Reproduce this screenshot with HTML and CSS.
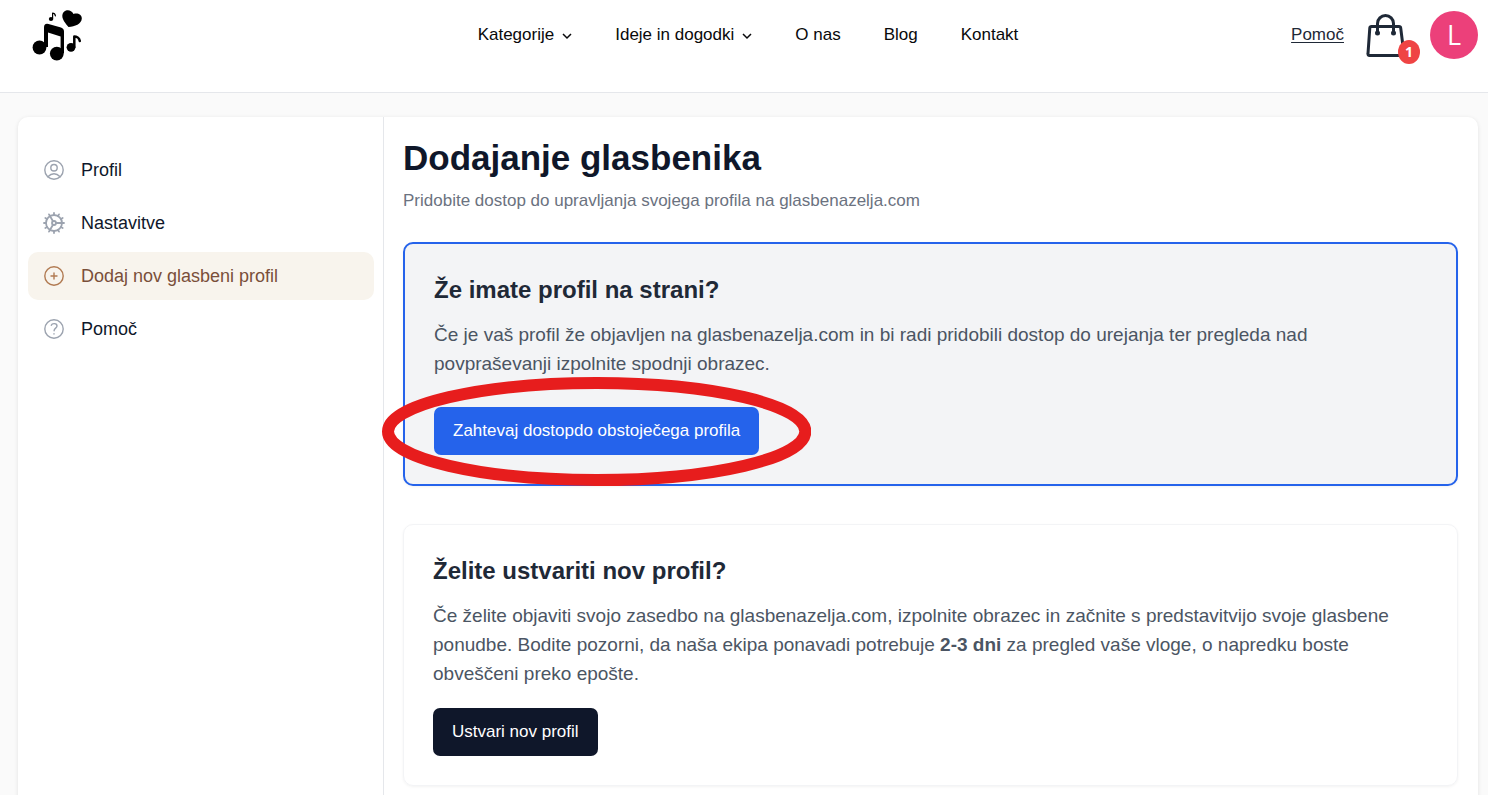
FILE: index.html
```html
<!DOCTYPE html>
<html lang="sl">
<head>
  <meta charset="UTF-8">
  <meta name="viewport" content="width=device-width, initial-scale=1.0">
  <title>Dodajanje glasbenika</title>
  <link rel="stylesheet" href="styles.css">
</head>
<body>
  <header>
    <a href="#" class="logo" aria-label="Glasbena želja">
      <svg width="52" height="52" viewBox="0 0 52 52">
        <circle cx="7.500" cy="38.500" r="6.900"/>
        <circle cx="24.800" cy="44.600" r="6.900"/>
        <path d="M12 38V18.500q0-4.500 4.500-3.500l12.500 3.500q3 1 3 4V44h-3.400V27.500l-12.600-4V38z"/>
        <circle cx="39" cy="38.300" r="4.400"/>
        <path d="M42.300 38V27.500c2 0 5 1.500 5.500 4.500" class="logo-line"/>
        <ellipse cx="19" cy="10" rx="2.200" ry="2"/>
        <path d="M20.600 10V4.200c1.200 0 2.500 1 2.800 2.600" class="logo-thin"/>
        <path d="M36.500 18c-3-3.500-6.800-8-6.100-12C31 .8 38.500-1 41.500 5c4-1.500 8.500.5 8.300 4.500C49.500 15 43 17.500 36.500 18z"/>
      </svg>
    </a>
    <nav>
      <ul>
        <li><a href="#">Kategorije <svg class="chevron" viewBox="0 0 10 10"><path d="M1 3l4 4 4-4"/></svg></a></li>
        <li><a href="#">Ideje in dogodki <svg class="chevron" viewBox="0 0 10 10"><path d="M1 3l4 4 4-4"/></svg></a></li>
        <li><a href="#">O nas</a></li>
        <li><a href="#">Blog</a></li>
        <li><a href="#">Kontakt</a></li>
      </ul>
    </nav>
    <div class="header-right">
      <a href="#" class="help-link">Pomoč</a>
      <a href="#" class="cart" aria-label="Košarica">
        <svg width="40" height="44" viewBox="0 0 40 44">
          <path d="M5.500 13.500h27.500q1.500 0 1.700 1.500l3.300 26q0 1.500-1.500 1.500h-33q-1.700 0-1.500-2L3.800 15q.2-1.500 1.700-1.500z"/>
          <path d="M11.500 20V10.500a8 8 0 0 1 16 0V20"/>
          <circle cx="11.500" cy="20" r="1"/>
          <circle cx="27.500" cy="20" r="1"/>
        </svg>
        <span class="cart-badge">1</span>
      </a>
      <button class="avatar">L</button>
    </div>
  </header>

  <main>
    <aside>
      <a href="#" class="side-link">
        <svg viewBox="0 0 24 24"><circle cx="12" cy="12" r="9.200"/><circle cx="12" cy="9.750" r="3.200"/><path d="M5.800 18.700q6.200-6 12.400 0"/></svg>
        Profil
      </a>
      <a href="#" class="side-link">
        <svg class="gear" viewBox="0 0 24 24"><circle cx="12" cy="12" r="8"/><circle cx="12" cy="12" r="2"/><path d="M14 12h8M11 10.300L7.500 4.200M11 13.700l-3.500 6.100M2 12h2M12 2v2M12 20v2M7 3.340l1 1.730M17 3.340l-1 1.730M3.340 7l1.730 1M20.660 7l-1.730 1M3.340 17l1.730-1M20.660 17l-1.730-1M7 20.660l1-1.730M17 20.660l-1-1.730"/></svg>
        Nastavitve
      </a>
      <a href="#" class="side-link active">
        <svg viewBox="0 0 24 24"><circle cx="12" cy="12" r="9.200"/><path d="M12 9v6M9 12h6"/></svg>
        Dodaj nov glasbeni profil
      </a>
      <a href="#" class="side-link">
        <svg viewBox="0 0 24 24"><circle cx="12" cy="12" r="9.200"/><path d="M9.300 8.300c.8-2.300 5.700-2.300 5.700.7 0 2.200-2.900 2-2.900 4.700M12 16.800v.3"/></svg>
        Pomoč
      </a>
    </aside>

    <section class="content">
      <h1>Dodajanje glasbenika</h1>
      <p class="subtitle">Pridobite dostop do upravljanja svojega profila na glasbenazelja.com</p>

      <div class="card card-selected">
        <h2>Že imate profil na strani?</h2>
        <p>Če je vaš profil že objavljen na glasbenazelja.com in bi radi pridobili dostop do urejanja ter pregleda nad povpraševanji izpolnite spodnji obrazec.</p>
        <div class="highlight">
          <button class="btn btn-blue">Zahtevaj dostopdo obstoječega profila</button>
          <svg class="ring" viewBox="0 0 428 109" preserveAspectRatio="none"><ellipse cx="214" cy="54.500" rx="208" ry="48.500"/></svg>
        </div>
      </div>

      <div class="card">
        <h2>Želite ustvariti nov profil?</h2>
        <p>Če želite objaviti svojo zasedbo na glasbenazelja.com, izpolnite obrazec in začnite s predstavitvijo svoje glasbene ponudbe. Bodite pozorni, da naša ekipa ponavadi potrebuje <strong>2-3 dni</strong> za pregled vaše vloge, o napredku boste obveščeni preko epošte.</p>
        <button class="btn btn-dark">Ustvari nov profil</button>
      </div>
    </section>
  </main>
</body>
</html>
```

FILE: styles.css
```css
* {
  box-sizing: border-box;
}

body {
  font-family: "Liberation Sans", Arial, sans-serif;
  font-size: 17px;
  margin: 0;
  background-color: #fafafa;
  color: #0f172a;
}

a {
  color: inherit;
  text-decoration: none;
}

h1, h2, p {
  margin: 0;
}

button {
  font-family: inherit;
  border: none;
  cursor: pointer;
}

/* Header */
header {
  display: grid;
  grid-template-columns: 1fr auto 1fr;
  align-items: center;
  padding: 9px 10px 31px 18px;
  background-color: white;
  border-bottom: 1px solid #e5e7eb;
}

.logo {
  margin-left: 14px;
  height: 52px;
}

.logo-line, .logo-thin {
  fill: none;
  stroke: black;
  stroke-width: 2.5;
  stroke-linecap: round;
  stroke-linejoin: round;
}

.logo-thin {
  stroke-width: 1.2;
}

nav ul {
  display: flex;
  gap: 43px;
  list-style-type: none;
  margin: 0;
  padding: 0;
  color: #09090b;
}

nav a {
  display: flex;
  align-items: center;
  gap: 8px;
}

.chevron {
  width: 10px;
  height: 10px;
  margin-top: 2px;
  fill: none;
  stroke: #09090b;
  stroke-width: 1.5;
}

.header-right {
  display: flex;
  justify-content: flex-end;
  align-items: center;
}

.help-link {
  color: #1f2937;
  text-decoration: underline;
  text-underline-offset: 2px;
}

.cart {
  position: relative;
  height: 44px;
  margin: 0 24px 0 22px;
}

.cart svg {
  fill: none;
  stroke: #1f2937;
  stroke-width: 3;
  stroke-linecap: round;
}

.cart-badge {
  position: absolute;
  right: -14px;
  bottom: -7px;
  width: 22px;
  height: 24px;
  border-radius: 50%;
  background-color: #ef4444;
  color: white;
  font-family: "Open Sans", sans-serif;
  font-size: 14px;
  font-weight: bold;
  line-height: 23px;
  text-align: center;
}

.avatar {
  width: 48px;
  height: 48px;
  padding: 0;
  border-radius: 50%;
  background-color: #ec407a;
  color: white;
  font-family: "Open Sans", sans-serif;
  font-size: 27px;
  line-height: 46px;
}

/* Page body */
main {
  display: grid;
  grid-template-columns: 366px 1fr;
  margin: 24px 10px 0 18px;
  background-color: white;
  border-radius: 10px;
  box-shadow: 0 1px 4px rgba(0, 0, 0, 0.1);
}

aside {
  display: flex;
  flex-direction: column;
  gap: 5px;
  padding: 29px 9px 29px 10px;
  border-right: 1px solid #e5e7eb;
}

.side-link {
  display: flex;
  align-items: center;
  gap: 15px;
  padding: 12px 14px;
  border-radius: 10px;
  font-size: 18px;
  line-height: 22px;
}

.side-link svg {
  width: 24px;
  height: 24px;
  fill: none;
  stroke: #9ca3af;
  stroke-width: 1.4;
  stroke-linecap: round;
}

.side-link .gear {
  stroke-width: 1.8;
}

.side-link.active {
  background-color: #f8f4ed;
  color: #7a4f3a;
}

.side-link.active svg {
  stroke: #b17a52;
}

.content {
  padding: 20px 20px 20px 19px;
}

h1 {
  font-size: 35px;
  line-height: 41px;
}

.subtitle {
  margin: 10px 0 28px;
  line-height: 26px;
  color: #6b7280;
}

.card {
  padding: 29px;
  border: 1px solid #f3f4f6;
  border-radius: 10px;
  box-shadow: 0 1px 3px rgba(0, 0, 0, 0.05);
}

.card h2 {
  margin-bottom: 13px;
  font-size: 24px;
  line-height: 34px;
  color: #1f2937;
}

.card p {
  margin-bottom: 20px;
  font-size: 19px;
  line-height: 29px;
  color: #4b5563;
}

.card-selected {
  margin-bottom: 38px;
  border: 2px solid #2563eb;
  background-color: #f3f4f6;
}

.card-selected p {
  margin-bottom: 29px;
}

.btn {
  display: block;
  height: 48px;
  padding: 0 19px;
  border-radius: 7px;
  color: white;
  font-size: 17px;
}

.btn-blue {
  background-color: #2563eb;
}

.btn-dark {
  background-color: #0f172a;
}

/* Red ring around the button */
.highlight {
  position: relative;
  width: fit-content;
}

.ring {
  position: absolute;
  top: -30px;
  left: -52px;
  width: calc(100% + 104px);
  height: 109px;
  fill: none;
  stroke: #e71d1d;
  stroke-width: 12;
  pointer-events: none;
}
```
